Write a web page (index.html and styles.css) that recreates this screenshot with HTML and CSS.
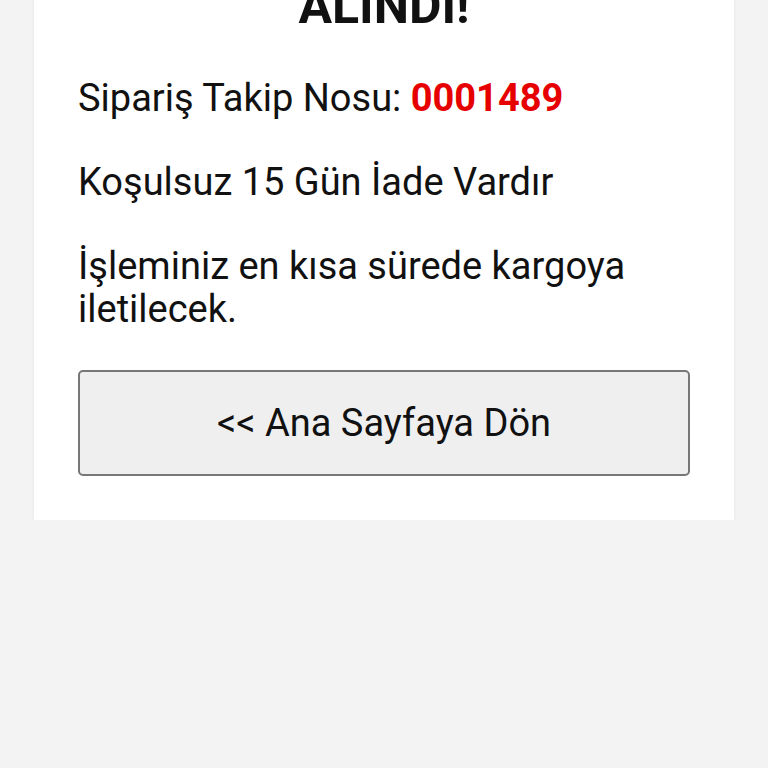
FILE: index.html
```html
<!DOCTYPE html>
<html lang="tr">
<head>
  <meta charset="UTF-8" />
  <meta name="viewport" content="width=device-width, initial-scale=1.0"/>
  <title>Siparişiniz Alındı</title>
  <link rel="stylesheet" href="styles.css">
</head>
<body>
  <div class="order-card">
    <h1>SİPARİŞİNİZ<br>ALINDI!</h1>

    <p>Sipariş Takip Nosu: <span class="order-no">0001489</span></p>
    <p>Koşulsuz 15 Gün İade Vardır</p>
    <p>İşleminiz en kısa sürede kargoya iletilecek.</p>

    <button type="button" class="home-btn">&lt;&lt; Ana Sayfaya Dön</button>
  </div>
</body>
</html>
```

FILE: styles.css
```css
body {
  margin: 0;
  background: #f3f3f3;
  font-family: Roboto, "Noto Sans", sans-serif;
  color: #111;
}

.order-card {
  background: #fff;
  margin: -84px 34px 0;
  padding: 0 44px 44px;
  box-shadow: 0 0 4px rgba(0, 0, 0, 0.06);
}

.order-card h1 {
  margin: 0;
  text-align: center;
  font-size: 50px;
  line-height: 60px;
  font-weight: 700;
}

.order-card p {
  margin: 41px 0 0;
  font-size: 38px;
  line-height: 43px;
}

.order-no {
  color: #e60000;
  font-weight: 700;
}

.home-btn {
  display: block;
  width: 100%;
  height: 106px;
  margin-top: 39px;
  background: #efefef;
  border: 2px solid #777;
  border-radius: 5px;
  font-family: inherit;
  font-size: 38px;
  color: #111;
}
```
